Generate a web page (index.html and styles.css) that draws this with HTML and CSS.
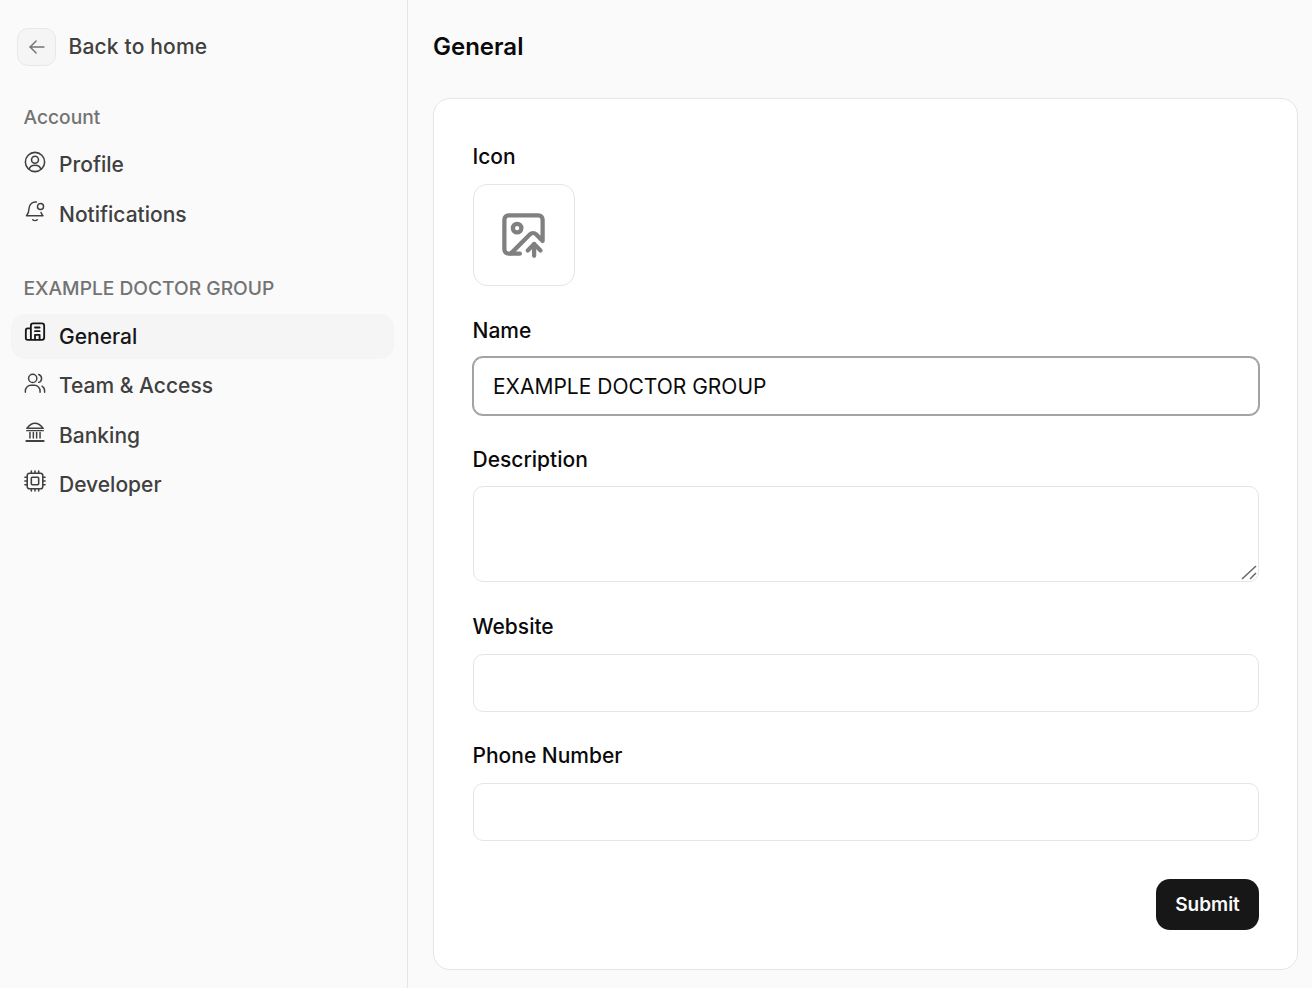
FILE: index.html
```html
<!DOCTYPE html>
<html lang="en">
<head>
    <meta charset="UTF-8">
    <meta name="viewport" content="width=device-width, initial-scale=1.0">
    <title>General</title>
    <link rel="stylesheet" href="styles.css">
</head>
<body>
    <div class="layout">
        <aside class="sidebar">
            <div class="back">
                <button class="back-button" type="button">
                    <svg viewBox="0 0 24 24" width="22" height="22" fill="none" stroke="currentColor" stroke-width="1.6" stroke-linecap="round" stroke-linejoin="round"><path d="M19.500 12H4.500"/><path d="M11 5.500 4.500 12l6.500 6.500"/></svg>
                </button>
                <span>Back to home</span>
            </div>

            <div class="group-title group-title-first">Account</div>
            <nav class="nav">
                <a class="nav-item">
                    <svg viewBox="0 0 24 24" fill="none" stroke="currentColor" stroke-width="1.7" stroke-linecap="round" stroke-linejoin="round"><circle cx="12" cy="12" r="10.500"/><circle cx="12" cy="9.500" r="3.800"/><path d="M5.500 19.800c1-2.900 3.500-4.300 6.500-4.300s5.500 1.400 6.500 4.300"/></svg>
                    <span>Profile</span>
                </a>
                <a class="nav-item">
                    <svg viewBox="0 0 24 24" fill="none" stroke="currentColor" stroke-width="1.6" stroke-linecap="round" stroke-linejoin="round"><path d="M13.500 2.200A7 7 0 0 0 5.500 9c0 4.500-1.300 6.500-2.800 8.200h18c-.9-1-1.600-2-2.100-3.500"/><path d="M9.500 21.500c1.200 1 3.800 1 5 0"/><circle cx="18" cy="7" r="3.300"/></svg>
                    <span>Notifications</span>
                </a>
            </nav>

            <div class="group-title">EXAMPLE DOCTOR GROUP</div>
            <nav class="nav">
                <a class="nav-item active">
                    <svg viewBox="0 0 24 24" fill="none" stroke="currentColor" stroke-width="2" stroke-linecap="round" stroke-linejoin="round"><path d="M7.500 19.500V4A2.500 2.500 0 0 1 10 1.500h9.500A2.500 2.500 0 0 1 22 4v13a2.500 2.500 0 0 1-2.500 2.500H4A2 2 0 0 1 2 17.500V9a2 2 0 0 1 2-2h3.500"/><path d="M12 6h5"/><path d="M12 10h5"/><path d="M12 19v-5h5v5"/></svg>
                    <span>General</span>
                </a>
                <a class="nav-item">
                    <svg viewBox="0 0 24 24" fill="none" stroke="currentColor" stroke-width="1.600" stroke-linecap="round" stroke-linejoin="round"><circle cx="9.500" cy="7" r="4.500"/><path d="M1.500 22v-1.500a6 6 0 0 1 6-6h4a6 6 0 0 1 6 6V22"/><path d="M16 2.700a4.500 4.500 0 0 1 0 8.600"/><path d="M22.500 22v-1.500a6 6 0 0 0-2.800-5"/></svg>
                    <span>Team &amp; Access</span>
                </a>
                <a class="nav-item">
                    <svg viewBox="0 0 24 24" fill="none" stroke="currentColor" stroke-width="1.600" stroke-linecap="round" stroke-linejoin="round"><path d="M3 8c2-2.500 5-5.500 9-5.500S19 5.500 21 8z"/><path d="M3 10.500h18"/><path d="M6.500 12.500v6"/><path d="M10.200 12.500v6"/><path d="M13.800 12.500v6"/><path d="M17.500 12.500v6"/><path d="M2.500 21.800h19" stroke-width="2"/></svg>
                    <span>Banking</span>
                </a>
                <a class="nav-item">
                    <svg viewBox="0 0 24 24" fill="none" stroke="currentColor" stroke-width="1.700" stroke-linecap="round" stroke-linejoin="round"><rect x="3.500" y="3.500" width="17" height="17" rx="2.500"/><rect x="8" y="8" width="8" height="8" rx="1"/><path d="M8 1v2.500M12 1v2.500M16 1v2.500M8 20.500V23M12 20.500V23M16 20.500V23M1 8h2.500M1 12h2.500M1 16h2.500M20.500 8H23M20.500 12H23M20.500 16H23"/></svg>
                    <span>Developer</span>
                </a>
            </nav>
        </aside>

        <main class="main">
            <h1 class="page-title">General</h1>
            <form class="card">
                <div class="field">
                    <label class="field-label">Icon</label>
                    <button class="icon-upload" type="button">
                        <svg viewBox="0 0 24 24" width="51" height="51" fill="none" stroke="currentColor" stroke-width="2" stroke-linecap="round" stroke-linejoin="round"><path d="M10.300 21H5a2 2 0 0 1-2-2V5a2 2 0 0 1 2-2h14a2 2 0 0 1 2 2v10l-3.100-3.100a2 2 0 0 0-2.814.014L6 21"/><path d="m14 19.500 3-3 3 3"/><path d="M17 22v-5.500"/><circle cx="9" cy="9" r="2"/></svg>
                    </button>
                </div>
                <div class="field">
                    <label class="field-label field-label-low" for="name">Name</label>
                    <input class="text-input focused" id="name" type="text" value="EXAMPLE DOCTOR GROUP">
                </div>
                <div class="field">
                    <label class="field-label" for="description">Description</label>
                    <div class="text-area-wrap">
                        <textarea class="text-input text-area" id="description"></textarea>
                        <svg class="resize-handle" viewBox="0 0 16 15" width="16" height="15" fill="none" stroke="#666" stroke-width="1.500"><path d="M1 14 15 1"/><path d="M9 14l6-6"/></svg>
                    </div>
                </div>
                <div class="field">
                    <label class="field-label" for="website">Website</label>
                    <input class="text-input" id="website" type="text">
                </div>
                <div class="field">
                    <label class="field-label" for="phone">Phone Number</label>
                    <input class="text-input" id="phone" type="text">
                </div>
                <div class="actions">
                    <button class="submit" type="submit">Submit</button>
                </div>
            </form>
        </main>
    </div>
</body>
</html>
```

FILE: styles.css
```css
* {
    box-sizing: border-box;
}
body {
    margin: 0;
    background-color: #fafafa;
    color: #0a0a0a;
    font-family: Inter, "Liberation Sans", sans-serif;
}
.layout {
    display: flex;
    height: 988px;
    overflow: hidden;
}

.sidebar {
    width: 408px;
    flex-shrink: 0;
    padding: 28px 13px 0 11px;
    border-right: 1px solid #e5e5e5;
}
.back {
    display: flex;
    align-items: center;
    gap: 12.500px;
    padding-left: 6px;
    font-size: 21px;
    font-weight: 500;
    letter-spacing: 0.17px;
    color: #404040;
}
.back span {
    margin-top: -2px;
}
.back-button {
    display: flex;
    align-items: center;
    justify-content: center;
    width: 39px;
    height: 38px;
    padding: 0;
    border: 1px solid #e8e8e8;
    border-radius: 11px;
    background-color: #f5f5f5;
    color: #737373;
}
.group-title {
    margin-top: 37.600px;
    padding: 0 12.500px;
    height: 28px;
    line-height: 28px;
    font-size: 19.200px;
    font-weight: 500;
    color: #737373;
}
.group-title-first {
    margin-top: 37px;
}
.nav {
    display: flex;
    flex-direction: column;
    gap: 4.400px;
    margin-top: 11.400px;
}
.nav-item {
    display: flex;
    align-items: center;
    gap: 13px;
    height: 45px;
    padding: 0 13px;
    border-radius: 14px;
    font-size: 21px;
    font-weight: 500;
    color: #404040;
}
.nav-item svg {
    width: 22px;
    height: 22px;
    flex-shrink: 0;
    margin-top: -6px;
}
.nav-item.active {
    background-color: #f5f5f5;
    color: #171717;
}

.main {
    flex: 1;
    padding: 0 14px 0 25px;
}
.page-title {
    margin: 0;
    height: 98px;
    line-height: 93px;
    font-size: 24px;
    font-weight: 600;
}
.card {
    display: flex;
    flex-direction: column;
    gap: 30.600px;
    height: 872px;
    padding: 44px 38px 0 39px;
    border: 1px solid #e5e5e5;
    border-radius: 17px;
    background-color: #fff;
}
.field {
    display: flex;
    flex-direction: column;
    align-items: flex-start;
    gap: 12.700px;
}
.field-label {
    height: 28px;
    margin-left: -0.500px;
    line-height: 28px;
    font-size: 21px;
    font-weight: 500;
}
.field-label-low {
    line-height: 30px;
}
.icon-upload {
    display: flex;
    align-items: center;
    justify-content: center;
    width: 102px;
    height: 102px;
    padding: 0;
    border: 1px solid #e5e5e5;
    border-radius: 14px;
    background-color: #fff;
    color: #808080;
}
.icon-upload svg {
    margin-right: 2px;
}
.text-input {
    display: block;
    width: 100%;
    height: 58px;
    padding: 2px 19px 0;
    border: 1px solid #e5e5e5;
    border-radius: 10px;
    outline: none;
    background-color: #fff;
    color: #0a0a0a;
    font-family: inherit;
    font-size: 21px;
}
.text-input.focused {
    border-color: #a3a3a3;
    box-shadow: 0 0 0 1px #a3a3a3;
}
.text-area-wrap {
    position: relative;
    width: 100%;
}
.text-area {
    height: 96px;
    padding-top: 12px;
    resize: none;
}
.resize-handle {
    position: absolute;
    right: 2px;
    bottom: 2px;
}
.actions {
    display: flex;
    justify-content: flex-end;
    margin-top: 7.500px;
}
.submit {
    width: 103px;
    height: 51px;
    padding: 0;
    border: none;
    border-radius: 14px;
    background-color: #171717;
    color: #fafafa;
    font-family: inherit;
    font-size: 19px;
    font-weight: 600;
}
```
